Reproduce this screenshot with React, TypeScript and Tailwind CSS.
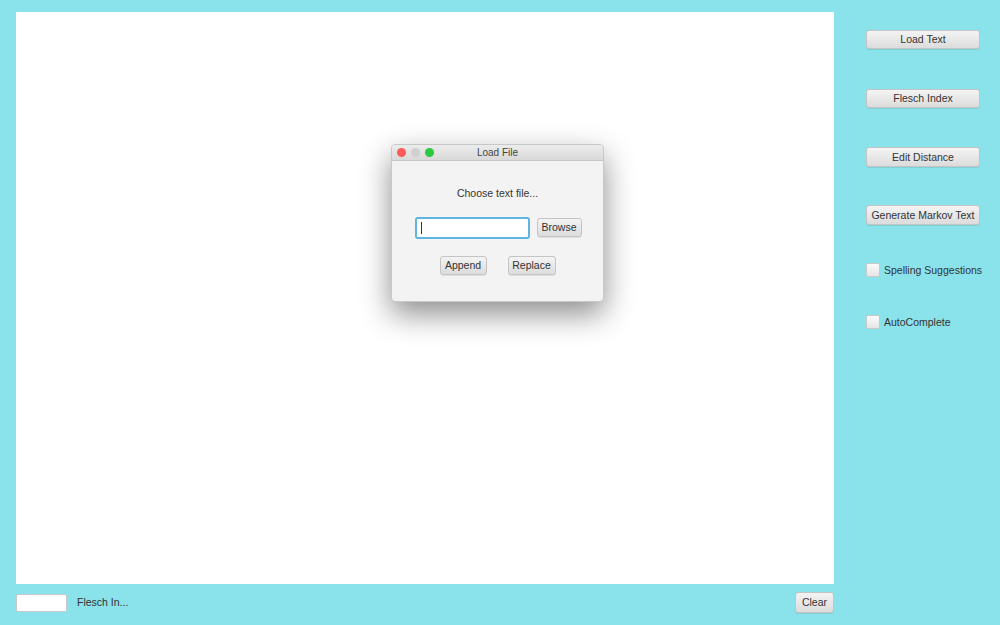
import React from "react";

function MacButton({ label, className = "" }: { label: string; className?: string }) {
  return (
    <button
      className={
        "rounded-[3px] border border-[#c4c4c4] bg-gradient-to-b from-[#f4f4f4] to-[#dcdcdc] text-[10.5px] leading-none text-[#333] shadow-[0_1px_0_rgba(0,0,0,0.08)] " +
        className
      }
    >
      {label}
    </button>
  );
}

function Check({ label }: { label: string }) {
  return (
    <label className="flex items-center gap-[4px] text-[10.5px] leading-none text-[#333]">
      <span className="h-[14px] w-[14px] rounded-[2px] border border-[#c9c9c9] bg-gradient-to-b from-[#fafafa] to-[#e6e6e6]" />
      {label}
    </label>
  );
}

export default function App() {
  return (
    <div
      className="flex h-[625px] w-[1000px] bg-[#8ae2ea]"
      style={{ fontFamily: '"Liberation Sans", Arial, sans-serif' }}
    >
      {/* main column */}
      <div className="flex w-[834px] flex-col pl-[16px] pt-[12px]">
        <div className="relative h-[572px] w-[818px] bg-white">
          {/* Load File dialog */}
          <div className="absolute left-[375px] top-[132px] w-[213px] overflow-hidden rounded-[4px] border border-[#c8c8c8] bg-[#f3f3f3] shadow-[0_12px_30px_rgba(0,0,0,0.45)]">
            <div className="relative flex h-[16px] items-center justify-center border-b border-[#c6c6c6] bg-gradient-to-b from-[#ececec] to-[#d9d9d9] text-[10px] text-[#444]">
              <div className="absolute left-[5px] top-[3px] flex gap-[5px]">
                <span className="h-[9px] w-[9px] rounded-full bg-[#fc5b57]" />
                <span className="h-[9px] w-[9px] rounded-full bg-[#d0d0d0]" />
                <span className="h-[9px] w-[9px] rounded-full bg-[#2bc840]" />
              </div>
              Load File
            </div>
            <div className="flex h-[140px] flex-col items-center">
              <div className="mt-[27px] text-[10.5px] leading-none text-[#333]">Choose text file...</div>
              <div className="mt-[18px] flex items-center gap-[7px] pl-[1px]">
                <div className="flex h-[22px] w-[115px] items-center rounded-[3px] border-2 border-[#5eb5e0] bg-white pl-[4px]">
                  <span className="h-[12px] w-px bg-[#333]" />
                </div>
                <MacButton label="Browse" className="h-[19px] w-[45px]" />
              </div>
              <div className="mt-[17px] flex gap-[21px]">
                <MacButton label="Append" className="h-[19px] w-[47px]" />
                <MacButton label="Replace" className="h-[19px] w-[48px]" />
              </div>
            </div>
          </div>
        </div>
        <div className="flex h-[37px] items-center justify-between">
          <div className="flex items-center">
            <div className="h-[18px] w-[51px] rounded-[2px] border border-[#c8c8c8] bg-white" />
            <span className="ml-[10px] text-[10.5px] leading-none text-[#333]">Flesch In...</span>
          </div>
          <MacButton label="Clear" className="h-[21px] w-[39px]" />
        </div>
      </div>

      {/* right side */}
      <div className="flex flex-col pl-[32px] pt-[30px]">
        <MacButton label="Load Text" className="h-[19px] w-[114px]" />
        <MacButton label="Flesch Index" className="mt-[40px] h-[19px] w-[114px]" />
        <MacButton label="Edit Distance" className="mt-[39px] h-[20px] w-[114px]" />
        <MacButton label="Generate Markov Text" className="mt-[38px] h-[20px] w-[114px]" />
        <div className="mt-[38px]">
          <Check label="Spelling Suggestions" />
        </div>
        <div className="mt-[38px]">
          <Check label="AutoComplete" />
        </div>
      </div>
    </div>
  );
}
